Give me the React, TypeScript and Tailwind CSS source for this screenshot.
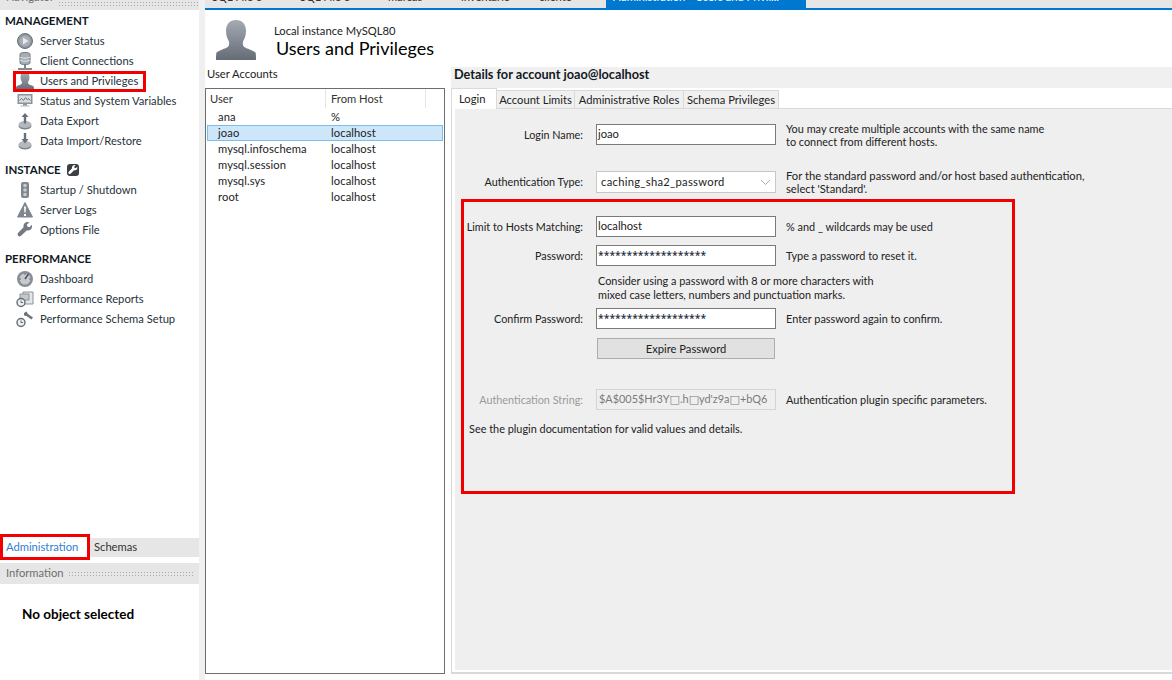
import React from "react";

const font = "font-['Lato','Noto_Sans',sans-serif]";

const UserIcon = ({ size = 20 }: { size?: number }) => (
  <svg width={size} height={size} viewBox="0 0 40 40">
    <defs>
      <linearGradient id="userFill" x1="0" y1="0" x2="0" y2="1">
        <stop offset="0" stopColor="#a4aab2" />
        <stop offset="1" stopColor="#646c76" />
      </linearGradient>
    </defs>
    <path
      d="M20 0c6.500 0 10 4.500 10 11 0 4-1 7-2.500 9.500-1 1.800-1 5 .5 6.300 2.500 2 9 3.500 11.500 5.700.5 1.500.5 5 .5 7.500H0c0-2.500 0-6 .5-7.500C3 30.300 9.500 28.800 12 26.800c1.500-1.300 1.500-4.500.5-6.300C11 18 10 15 10 11 10 4.500 13.500 0 20 0z"
      fill="url(#userFill)"
    />
  </svg>
);

const ServerStatusIcon = () => (
  <svg width="20" height="20" viewBox="0 0 20 20">
    <circle cx="10" cy="10" r="7.500" fill="#8d949c" stroke="#6c737b" />
    <circle cx="10" cy="10" r="5.500" fill="#a9afb6" />
    <path d="M8 6.500v7l5.500-3.500z" fill="#e8eaec" />
  </svg>
);

const ConnectionsIcon = () => (
  <svg width="20" height="20" viewBox="0 0 20 20">
    <path d="M5 3c0-2 10-2 10 0v9c0 2-10 2-10 0z" fill="#a8aeb5" stroke="#737a82" />
    <path d="M5 6c1 1.500 9 1.500 10 0M5 9c1 1.500 9 1.500 10 0" stroke="#e6e8ea" fill="none" />
    <path d="M10 14v3M3 18h14" stroke="#5e656d" strokeWidth="1.600" />
  </svg>
);

const MonitorIcon = () => (
  <svg width="20" height="20" viewBox="0 0 20 20">
    <path d="M2.500 3h15v10h-15z" fill="#8c939b" />
    <path d="M4 4.500h12v7H4z" fill="#d9dcdf" />
    <path d="M4.500 9.500l2-2 2 2 2-3 2 2.500 1-1.500 2 2" stroke="#6d747c" fill="none" />
    <path d="M8 13h4v1.500H8z" fill="#8c939b" />
    <path d="M5.500 14.500h9v1h-9z" fill="#a9afb6" />
  </svg>
);

const DiskArrowIcon = ({ up }: { up: boolean }) => (
  <svg width="20" height="20" viewBox="0 0 20 20">
    <ellipse cx="10" cy="15" rx="6.500" ry="3.500" fill="#7d848c" />
    <ellipse cx="10" cy="13.500" rx="6.500" ry="3.500" fill="#b4b9bf" />
    <path
      d={up ? "M10 2l3.500 4H11.200v6.500H8.800V6H6.500z" : "M8.800 2h2.400v6h2.300L10 12.500 6.500 8h2.300z"}
      fill="#686f77"
    />
  </svg>
);

const TrafficIcon = () => (
  <svg width="20" height="20" viewBox="0 0 20 20">
    <rect x="6" y="2" width="8" height="16" rx="2" fill="#7f868e" />
    <circle cx="10" cy="5.500" r="1.800" fill="#c9cdd1" />
    <circle cx="10" cy="10" r="1.800" fill="#c9cdd1" />
    <circle cx="10" cy="14.500" r="1.800" fill="#c9cdd1" />
  </svg>
);

const WarningIcon = () => (
  <svg width="20" height="20" viewBox="0 0 20 20">
    <path d="M10 2.500l7.500 14.500h-15z" fill="#7f868e" stroke="#7f868e" strokeLinejoin="round" />
    <path d="M9 6.500h2l-.4 6h-1.200zM9 14h2v2H9z" fill="#fff" />
  </svg>
);

const WrenchIcon = () => (
  <svg width="16" height="16" viewBox="0 0 20 20">
    <path
      d="M18.500 3.500l-3 3-2.500-.8-.7-2.500 3-2.700c-2.500-.8-5-.2-6.300 1.600-1 1.400-1.200 3-.7 4.500L1.500 13.500c-1 1-1 2.500-.2 3.600 1 1.200 2.800 1.200 3.800.2l7-6.800c1.700.5 3.500.2 5-1 1.500-1.500 2-3.800 1.400-6z"
      fill="#737a82"
    />
  </svg>
);

const GaugeIcon = () => (
  <svg width="20" height="20" viewBox="0 0 20 20">
    <circle cx="10" cy="10" r="8" fill="#878e96" />
    <circle cx="10" cy="10" r="5.500" fill="#c6cacf" />
    <path d="M10 10l3.500-5" stroke="#4f565e" strokeWidth="1.600" />
    <path d="M4 10h2M10 4v2M14 10h2" stroke="#6c737b" />
  </svg>
);

const ReportsIcon = () => (
  <svg width="20" height="20" viewBox="0 0 20 20">
    <path d="M8 3h10v12H8z" fill="#e3e5e7" stroke="#8c939b" />
    <path d="M5 5h9v6H5z" fill="#c5c9cd" stroke="#8c939b" />
    <circle cx="6" cy="13.500" r="4" fill="#eceef0" stroke="#656c74" strokeWidth="1.400" />
    <path d="M6 11.500v2h2" stroke="#656c74" fill="none" />
  </svg>
);

const SchemaSetupIcon = () => (
  <svg width="20" height="20" viewBox="0 0 20 20">
    <circle cx="6" cy="13.500" r="4" fill="#eceef0" stroke="#656c74" strokeWidth="1.400" />
    <path d="M6 11.500v2h2" stroke="#656c74" fill="none" />
    <path d="M9 4l2.500-1.500 1.500 2.500 5 3.500-1.500 2-5-3.500-2.500-.5z" fill="#6c737b" />
  </svg>
);

const SectionWrench = () => (
  <span className="ml-[6px] flex h-[12px] w-[12px] items-center justify-center rounded-[3px] bg-[#3b3f44]">
    <svg width="10" height="10" viewBox="0 0 20 20">
      <path
        d="M18.500 3.500l-3 3-2.500-.8-.7-2.500 3-2.700c-2.500-.8-5-.2-6.300 1.600-1 1.400-1.200 3-.7 4.500L1.500 13.500c-1 1-1 2.500-.2 3.600 1 1.200 2.800 1.200 3.800.2l7-6.800c1.700.5 3.500.2 5-1 1.500-1.500 2-3.800 1.400-6z"
        fill="#fff"
      />
    </svg>
  </span>
);

const NavItem = ({ icon, label }: { icon: React.ReactNode; label: string }) => (
  <div className="flex h-[20px] items-center text-[#26323a]">
    <span className="ml-[15px] mr-[5px] flex w-[20px] justify-center">{icon}</span>
    <span>{label}</span>
  </div>
);

const SectionTitle = ({ children }: { children: React.ReactNode }) => (
  <div className="flex h-[20px] items-center pl-[5px] text-[11.5px] font-bold text-[#10181e]">{children}</div>
);

const dots =
  "h-[5px] flex-1 bg-[radial-gradient(#a9a9a9_0.7px,transparent_0.8px)] bg-[length:3px_3px]";

const Sidebar = () => (
  <div className="flex h-full w-[199px] shrink-0 flex-col bg-white">
    <div className="flex h-[10px] items-start overflow-hidden bg-[#e6e6e6] pl-[6px]">
      <span className="-mt-[10px] text-[#6f6f6f]">Navigator</span>
      <span className={`ml-[4px] mt-[1px] ${dots}`} />
    </div>
    <div className="mt-[1px]">
      <SectionTitle>MANAGEMENT</SectionTitle>
      <NavItem icon={<ServerStatusIcon />} label="Server Status" />
      <NavItem icon={<ConnectionsIcon />} label="Client Connections" />
      <NavItem icon={<UserIcon size={18} />} label="Users and Privileges" />
      <NavItem icon={<MonitorIcon />} label="Status and System Variables" />
      <NavItem icon={<DiskArrowIcon up />} label="Data Export" />
      <NavItem icon={<DiskArrowIcon up={false} />} label="Data Import/Restore" />
    </div>
    <div className="mt-[9px]">
      <SectionTitle>
        INSTANCE <SectionWrench />
      </SectionTitle>
      <NavItem icon={<TrafficIcon />} label="Startup / Shutdown" />
      <NavItem icon={<WarningIcon />} label="Server Logs" />
      <NavItem icon={<WrenchIcon />} label="Options File" />
    </div>
    <div className="mt-[9px]">
      <SectionTitle>PERFORMANCE</SectionTitle>
      <NavItem icon={<GaugeIcon />} label="Dashboard" />
      <NavItem icon={<ReportsIcon />} label="Performance Reports" />
      <NavItem icon={<SchemaSetupIcon />} label="Performance Schema Setup" />
    </div>
    <div className="mt-auto flex h-[19px] items-center bg-[#e6e6e6] pb-[1px]">
      <span className="flex h-[19px] w-[88px] items-center bg-white pl-[6px] text-[#2f7fd0]">Administration</span>
      <span className="pl-[6px] text-[#333]">Schemas</span>
    </div>
    <div className="mt-[6px] flex h-[21px] items-center bg-[#e6e6e6] px-[6px] pb-[1px] text-[#6f6f6f]">
      <span>Information</span>
      <span className={`ml-[4px] ${dots}`} />
    </div>
    <div className="h-[96px] pl-[22px] pt-[23px] text-[13.5px] font-bold text-black">No object selected</div>
  </div>
);

const topTabs = [
  { label: "SQL File 6", width: "w-[88px]" },
  { label: "SQL File 6", width: "w-[88px]" },
  { label: "marcas", width: "w-[73px]" },
  { label: "inventario", width: "w-[78px]" },
  { label: "cliente", width: "w-[67px]" },
];

const TopTabs = () => (
  <div className="flex h-[8px] shrink-0 overflow-hidden bg-[#e6e6e6] pl-[7px]">
    {topTabs.map((tab, i) => (
      <span key={i} className={`${tab.width} -mt-[10px] shrink-0 text-[#333]`}>
        {tab.label}
      </span>
    ))}
    <span className="flex h-[8px] w-[200px] shrink-0 justify-between bg-[#0078d0] pl-[7px] pr-[5px] text-white">
      <span className="-mt-[10px]">Administration - Users and Privil...</span>
      <span className="-mt-[10px]">×</span>
    </span>
  </div>
);

const users = [
  { name: "ana", host: "%" },
  { name: "joao", host: "localhost", selected: true },
  { name: "mysql.infoschema", host: "localhost" },
  { name: "mysql.session", host: "localhost" },
  { name: "mysql.sys", host: "localhost" },
  { name: "root", host: "localhost" },
];

const UserTable = () => (
  <div className="h-[586px] w-[240px] border border-[#6e6e6e] bg-white">
    <div className="flex h-[19px] items-center text-[#333]">
      <span className="flex h-full w-[120px] items-center border-r border-[#e5e5e5] pl-[4px]">User</span>
      <span className="flex h-full w-[100px] items-center border-r border-[#e5e5e5] pl-[5px]">From Host</span>
    </div>
    <div className="mt-[1px]">
      {users.map(u => (
        <div
          key={u.name}
          className={
            u.selected
              ? "mx-[1px] flex h-[16px] items-center border border-[#7ac0e8] bg-[#cde6f9] text-[#222]"
              : "mx-[1px] flex h-[16px] items-center border border-transparent text-[#222]"
          }
        >
          <span className="w-[123px] pl-[10px] tracking-[0.1px]">{u.name}</span>
          <span className="tracking-[0.1px]">{u.host}</span>
        </div>
      ))}
    </div>
  </div>
);

const Stars = () => (
  <span className="font-['Noto_Sans',sans-serif] text-[10.4px] font-medium text-[#1d2c3a]">*******************</span>
);

const Box = () => <span className="font-['DejaVu_Sans',sans-serif] text-[11px]">□</span>;

const Field = ({
  label,
  value,
  hint,
  disabled,
}: {
  label: string;
  value: React.ReactNode;
  hint?: string;
  disabled?: boolean;
}) => (
  <div className="flex h-[21px] items-center">
    <span
      className={
        disabled
          ? "w-[128px] whitespace-nowrap text-right text-[10.8px] text-[#9a9a9a]"
          : "w-[128px] whitespace-nowrap text-right text-[10.8px] text-[#222]"
      }
    >
      {label}
    </span>
    <span
      className={
        disabled
          ? "ml-[13px] flex h-full w-[180px] items-center overflow-hidden whitespace-pre border border-[#d4d4d4] bg-[#efefef] pb-[1px] pl-[2px] text-[10.9px] text-[#7a7a7a]"
          : "ml-[13px] flex h-full w-[180px] items-center border border-[#7a7a7a] bg-white pb-[1px] pl-[1px] text-[#222]"
      }
    >
      {value}
    </span>
    <span className="ml-[10px] text-[10.9px] text-[#222]">{hint}</span>
  </div>
);

const Details = () => (
  <div className="flex h-full flex-1 flex-col">
    <div className="flex h-[21px] shrink-0 items-start bg-[#f0f0f0] pl-[3px] text-[12.7px] font-bold text-[#10181e]">
      Details for account joao@localhost
    </div>
    <div className="flex h-[21px] shrink-0 items-end border-b border-[#d9d9d9] text-[#222]">
      <span className="relative -mb-[1px] flex h-[21px] w-[46px] items-center border border-b-0 border-[#d9d9d9] bg-white pl-[7px]">
        Login
      </span>
      <span className="flex h-[18px] w-[78px] items-center justify-center border-r border-t border-[#d9d9d9] bg-[#f0f0f0]">Account Limits</span>
      <span className="flex h-[18px] w-[109px] items-center justify-center border-r border-t border-[#d9d9d9] bg-[#f0f0f0]">Administrative Roles</span>
      <span className="flex h-[18px] w-[95px] items-center justify-center border-r border-t border-[#d9d9d9] bg-[#f0f0f0]">Schema Privileges</span>
    </div>
    <div className="h-[565px] shrink-0 border-b-2 border-l border-[#d9d9d9] bg-white pb-[2px] pl-[3px]">
      <div className="h-full bg-[#efefef] pt-[15px] text-[#222]">
        <Field label="Login Name:" value="joao" />
        <div className="-mt-[23px] ml-[331px] h-[23px] text-[10.9px] leading-[13px]">
          You may create multiple accounts with the same name
          <br />
          to connect from different hosts.
        </div>
        <div className="mt-[26px] flex h-[22px] items-center">
          <span className="w-[128px] text-right text-[10.8px]">Authentication Type:</span>
          <span className="ml-[13px] flex h-full w-[180px] items-center justify-between border border-[#c8c8c8] bg-white pl-[4px] pr-[4px]">
            <span className="tracking-[0.3px]">caching_sha2_password</span>
            <svg width="11" height="7" viewBox="0 0 11 7">
              <path d="M1 1l4.500 4.500L10 1" stroke="#a8a8a8" fill="none" />
            </svg>
          </span>
          <span className="ml-[10px] leading-[13px]">
            For the standard password and/or host based authentication,
            <br />
            select 'Standard'.
          </span>
        </div>
        <div className="mt-[23px]">
          <Field label="Limit to Hosts Matching:" value="localhost" hint="% and _ wildcards may be used" />
        </div>
        <div className="mt-[8px]">
          <Field label="Password:" value={<Stars />} hint="Type a password to reset it." />
        </div>
        <div className="ml-[143px] mt-[8px] h-[28px] text-[10.9px] leading-[14px]">
          Consider using a password with 8 or more characters with
          <br />
          mixed case letters, numbers and punctuation marks.
        </div>
        <div className="mt-[6px]">
          <Field label="Confirm Password:" value={<Stars />} hint="Enter password again to confirm." />
        </div>
        <div className="ml-[142px] mt-[9px] flex h-[21px] w-[178px] items-center justify-center border border-[#adadad] bg-[#e1e1e1]">
          Expire Password
        </div>
        <div className="mt-[30px]">
          <Field
            disabled
            label="Authentication String:"
            value={
              <span>
                $A$005$Hr3Y
                <Box />
                .h
                <Box />
                yd'z9a
                <Box />
                +bQ6
              </span>
            }
            hint="Authentication plugin specific parameters."
          />
        </div>
        <div className="ml-[14px] mt-[12px] text-[10.9px]">See the plugin documentation for valid values and details.</div>
      </div>
    </div>
  </div>
);

export default function App() {
  return (
    <div className={`${font} relative flex h-[680px] w-[1172px] overflow-hidden bg-[#f0f0f0] text-[11.2px] leading-[14px]`}>
      <Sidebar />
      <div className="ml-[6px] flex h-full min-w-0 flex-1 flex-col bg-white">
        <TopTabs />
        <div className="h-[2px] shrink-0 bg-[#0078d0]" />
        <div className="flex h-[57px] shrink-0 pl-[11px] pt-[10px]">
          <UserIcon size={40} />
          <div className="ml-[18px] mt-[4px] text-[#222]">
            <div>Local instance MySQL80</div>
            <div className="ml-[2px] text-[18px] leading-[20px] text-black">Users and Privileges</div>
          </div>
        </div>
        <div className="flex min-h-0 flex-1">
          <div className="w-[246px] shrink-0">
            <div className="flex h-[21px] items-start pl-[2px] text-[#222]">User Accounts</div>
            <UserTable />
          </div>
          <Details />
        </div>
      </div>
      {/* red annotation boxes drawn over the screenshot */}
      <div className="absolute left-[13px] top-[71px] h-[21px] w-[133px] border-[3px] border-[#f00000]" />
      <div className="absolute left-0 top-[534px] h-[26px] w-[90px] border-[3px] border-[#f00000]" />
      <div className="absolute left-[461px] top-[199px] h-[295px] w-[554px] border-[3px] border-[#f00000]" />
    </div>
  );
}
